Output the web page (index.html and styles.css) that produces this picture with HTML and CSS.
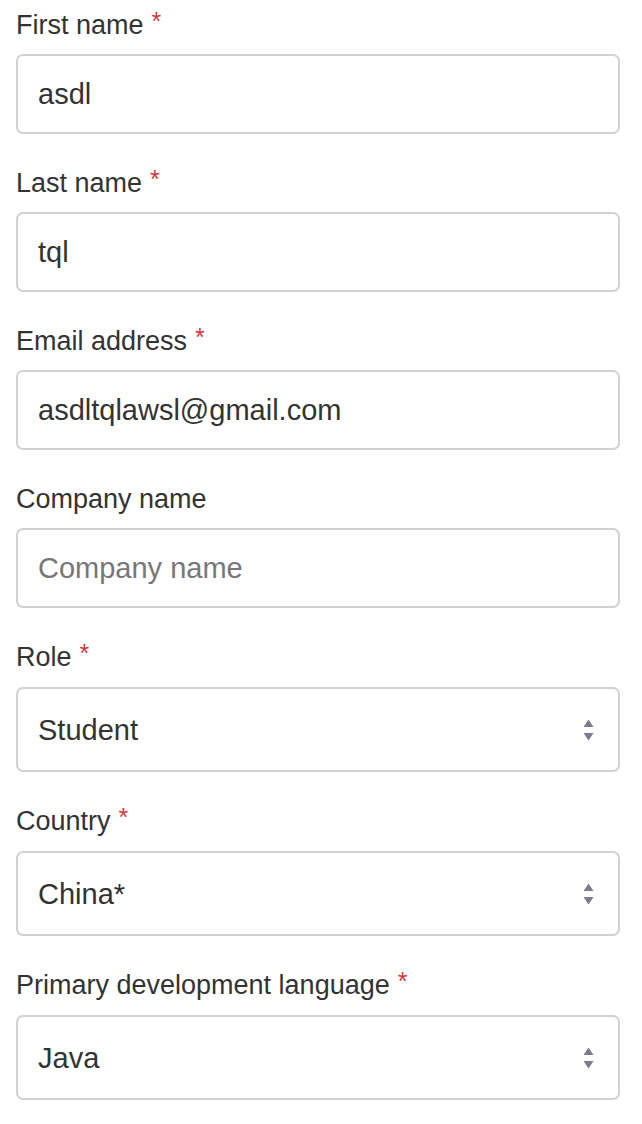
FILE: index.html
```html
<!DOCTYPE html>
<html lang="en">
<head>
<meta charset="utf-8">
<title>Sign up</title>
<link rel="stylesheet" href="styles.css">
</head>
<body>
<form class="form">
  <div class="field">
    <label class="label" for="fn">First name<span class="req">*</span></label>
    <input class="control" id="fn" type="text" value="asdl">
  </div>
  <div class="field">
    <label class="label" for="ln">Last name<span class="req">*</span></label>
    <input class="control" id="ln" type="text" value="tql">
  </div>
  <div class="field">
    <label class="label" for="em">Email address<span class="req">*</span></label>
    <input class="control" id="em" type="text" value="asdltqlawsl@gmail.com">
  </div>
  <div class="field">
    <label class="label" for="cn">Company name</label>
    <input class="control" id="cn" type="text" placeholder="Company name">
  </div>
  <div class="field field-select">
    <label class="label" for="role">Role<span class="req">*</span></label>
    <div class="select-wrap">
      <select class="control select" id="role"><option>Student</option></select>
      <svg class="arrows" width="11" height="22" viewBox="0 0 11 22" aria-hidden="true"><path d="M5.5 0.5 L10.5 8 H0.5 Z M0.5 14 H10.5 L5.5 21.5 Z"/></svg>
    </div>
  </div>
  <div class="field field-select">
    <label class="label" for="country">Country<span class="req">*</span></label>
    <div class="select-wrap">
      <select class="control select" id="country"><option>China*</option></select>
      <svg class="arrows" width="11" height="22" viewBox="0 0 11 22" aria-hidden="true"><path d="M5.5 0.5 L10.5 8 H0.5 Z M0.5 14 H10.5 L5.5 21.5 Z"/></svg>
    </div>
  </div>
  <div class="field field-select">
    <label class="label" for="lang">Primary development language<span class="req">*</span></label>
    <div class="select-wrap">
      <select class="control select" id="lang"><option>Java</option></select>
      <svg class="arrows" width="11" height="22" viewBox="0 0 11 22" aria-hidden="true"><path d="M5.5 0.5 L10.5 8 H0.5 Z M0.5 14 H10.5 L5.5 21.5 Z"/></svg>
    </div>
  </div>
</form>
</body>
</html>
```

FILE: styles.css
```css
html, body {
  margin: 0;
  padding: 0;
  background: #ffffff;
}

body {
  font-family: "Liberation Sans", Arial, sans-serif;
  color: #333333;
}

.form {
  display: flex;
  flex-direction: column;
  gap: 31px;
  padding: 7px 22px 0 16px;
}

.field {
  display: flex;
  flex-direction: column;
  gap: 11px;
}

.field-select {
  gap: 12px;
}

.label {
  font-size: 27px;
  line-height: 36px;
  color: #333333;
}

.req {
  color: #d0393e;
  font-size: 25px;
  margin-left: 8px;
  vertical-align: 4px;
  line-height: 0;
}

.control {
  box-sizing: border-box;
  width: 100%;
  height: 80px;
  margin: 0;
  padding: 0 20px;
  border: 2px solid #d2d2d2;
  border-radius: 7px;
  background: #ffffff;
  font-family: "Liberation Sans", Arial, sans-serif;
  font-size: 29px;
  color: #333333;
  outline: none;
}

.control::placeholder {
  color: #777777;
  opacity: 1;
}

.select-wrap {
  position: relative;
}

.select {
  -webkit-appearance: none;
  appearance: none;
  height: 85px;
  padding-right: 50px;
}

.arrows {
  position: absolute;
  right: 26px;
  top: 50%;
  transform: translateY(-50%);
  fill: #7c7c8c;
  pointer-events: none;
}
```
